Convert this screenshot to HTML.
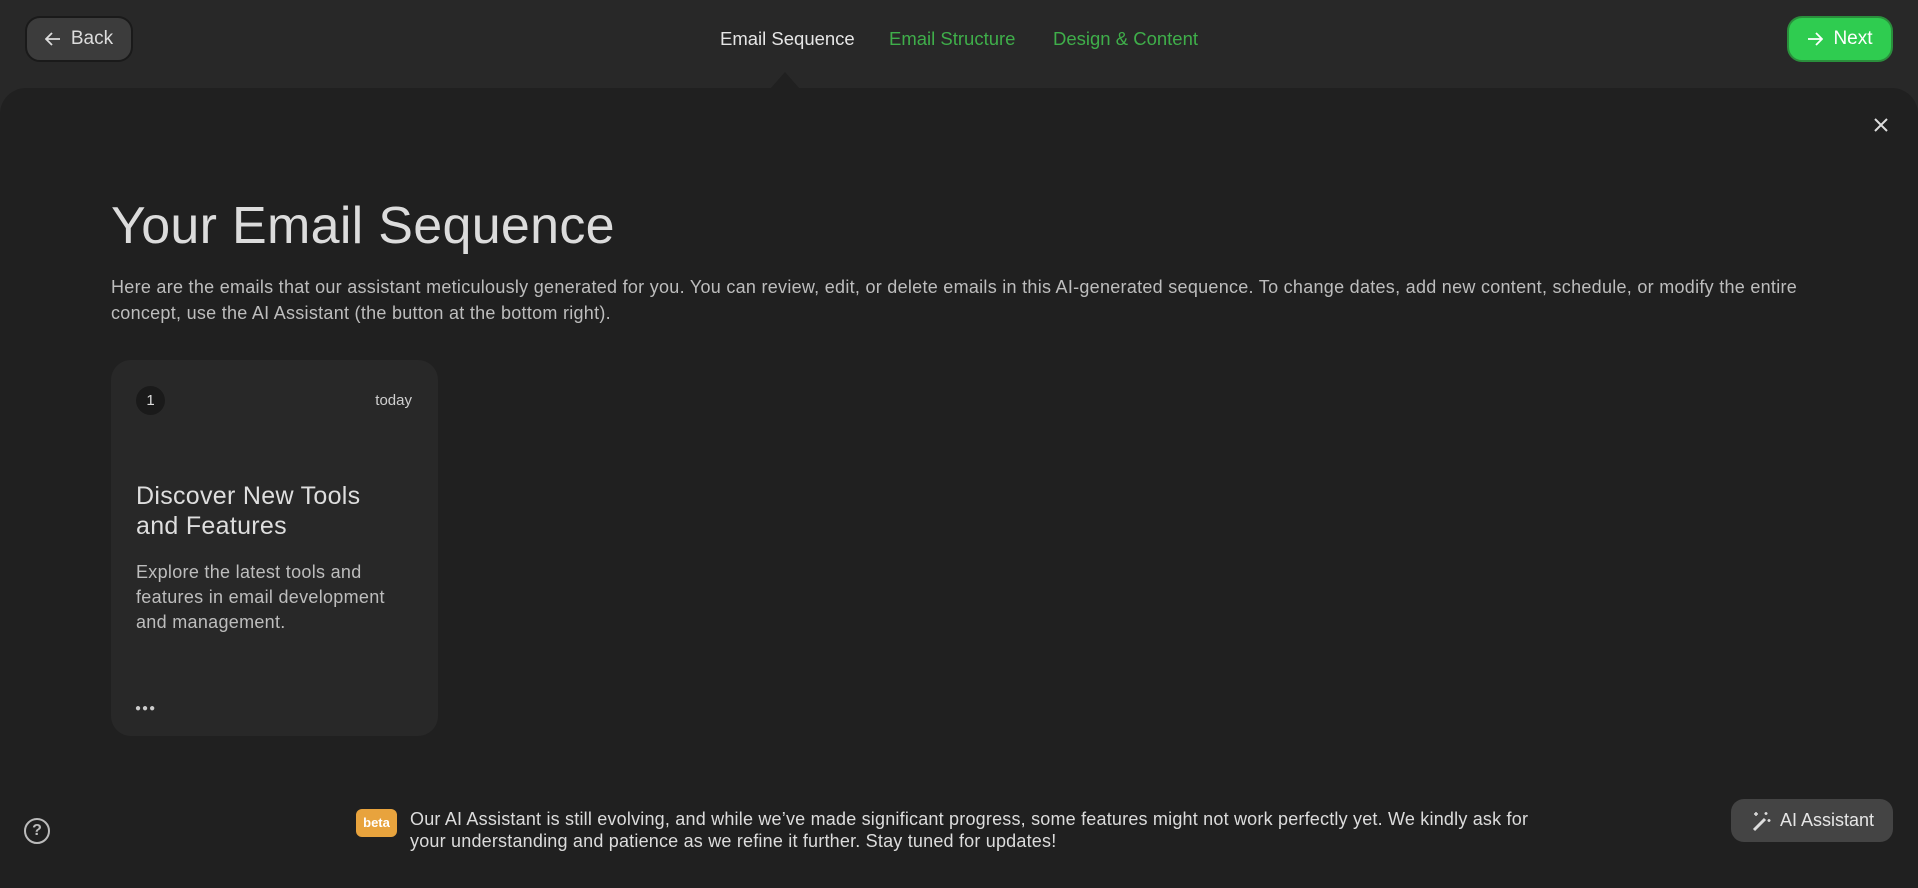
<!DOCTYPE html>
<html><head><meta charset="utf-8"><style>
*{margin:0;padding:0;box-sizing:border-box}
body{width:1918px;height:860px;background:#282828;font-family:"Liberation Sans",sans-serif;position:relative;overflow:hidden;color:#ddd}
.abs{position:absolute}
.btn{position:absolute;top:16px;height:46px;border-radius:15px;display:flex;align-items:center;justify-content:center;font-size:19px;gap:10px}
.panel{position:absolute;left:0;top:88px;width:1918px;height:800px;background:#202020;border-radius:26px 26px 0 0}
</style></head><body>
<div class="btn" style="left:25px;width:108px;background:#3c3c3c;border:2px solid #1a1a1a;color:#ddd">
<svg width="16" height="14" viewBox="0 0 16 14"><path d="M15 7H2M7 1L1 7l6 6" stroke="#ddd" stroke-width="1.8" fill="none"/></svg>Back</div>
<div class="abs" style="left:720px;top:28px;font-size:18.5px;color:#e6e6e6">Email Sequence</div>
<div class="abs" style="left:889px;top:28px;font-size:18.5px;color:#3fae4a">Email Structure</div>
<div class="abs" style="left:1053px;top:28px;font-size:18.5px;color:#3fae4a">Design &amp; Content</div>
<div class="btn" style="left:1787px;width:106px;background:#2fcc50;border:2px solid #2a8f3c;color:#fff">
<svg width="16" height="14" viewBox="0 0 16 14"><path d="M1 7h13M9 1l6 6-6 6" stroke="#fff" stroke-width="1.8" fill="none"/></svg>Next</div>
<div class="panel"></div>
<div class="abs" style="left:770px;top:72px;width:0;height:0;border-left:15px solid transparent;border-right:15px solid transparent;border-bottom:17px solid #202020"></div>
<svg class="abs" style="left:1874px;top:118px" width="14" height="14" viewBox="0 0 14 14"><path d="M1 1l12 12M13 1L1 13" stroke="#ddd" stroke-width="2"/></svg>
<div class="abs" style="left:111px;top:196px;font-size:52px;color:#dcdcdc;letter-spacing:0.3px">Your Email Sequence</div>
<div class="abs" style="left:111px;top:274px;width:1720px;font-size:18px;line-height:26px;color:#bdbdbd;letter-spacing:0.28px">Here are the emails that our assistant meticulously generated for you. You can review, edit, or delete emails in this AI-generated sequence. To change dates, add new content, schedule, or modify the entire concept, use the AI Assistant (the button at the bottom right).</div>
<div class="abs" style="left:111px;top:360px;width:327px;height:376px;background:#282828;border-radius:20px">
<div class="abs" style="left:25px;top:26px;width:29px;height:29px;border-radius:50%;background:#1a1a1a;color:#ddd;font-size:15px;text-align:center;line-height:29px">1</div>
<div class="abs" style="right:26px;top:32px;font-size:15px;color:#cfcfcf">today</div>
<div class="abs" style="left:25px;top:121px;width:260px;font-size:25px;line-height:30px;color:#dedede;letter-spacing:0.3px">Discover New Tools and Features</div>
<div class="abs" style="left:25px;top:200px;width:260px;font-size:18px;line-height:25px;color:#bdbdbd;letter-spacing:0.3px">Explore the latest tools and features in email development and management.</div>
<div class="abs" style="left:24px;top:343px;font-size:10px;letter-spacing:1px;color:#ccc">●●●</div>
</div>
<div class="abs" style="left:24px;top:818px;width:26px;height:26px;border:2px solid #bbb;border-radius:50%;color:#bbb;font-size:16px;text-align:center;line-height:22px;font-weight:bold">?</div>
<div class="abs" style="left:356px;top:809px;width:41px;height:28px;background:#e8a33d;border-radius:6px;color:#fff;font-size:13px;font-weight:bold;text-align:center;line-height:28px">beta</div>
<div class="abs" style="left:410px;top:808px;width:1145px;font-size:18px;line-height:22px;color:#dcdcdc;letter-spacing:0.2px">Our AI Assistant is still evolving, and while we’ve made significant progress, some features might not work perfectly yet. We kindly ask for your understanding and patience as we refine it further. Stay tuned for updates!</div>
<div class="abs" style="left:1731px;top:799px;width:162px;height:43px;background:#444;border-radius:13px;display:flex;align-items:center;justify-content:center;gap:8px;font-size:18px;color:#e6e6e6">
<svg width="22" height="22" viewBox="0 0 22 22"><path d="M4 20L15 9" stroke="#ddd" stroke-width="3"/><path d="M6 2v4M4 4h4M16 2v3M14.5 3.5h3M19 9v3M17.5 10.5h3" stroke="#ddd" stroke-width="1.5"/></svg>AI Assistant</div>
</body></html>
